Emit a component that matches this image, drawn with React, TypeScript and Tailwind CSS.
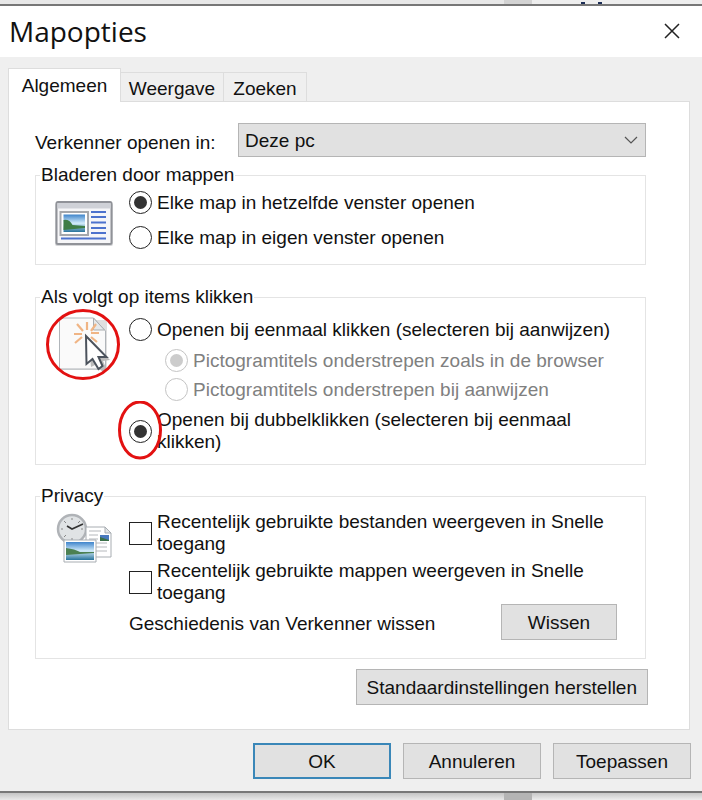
import type { ReactNode } from 'react';

const buttonStyle = 'h-9 border border-[#b5b5b5] bg-[#e1e1e1] pt-0.5';

function Group({ title, icon, className, children }: { title: string; icon: ReactNode; className: string; children: ReactNode }) {
  return (
    <fieldset className={`mr-0.5 min-w-0 border border-[#e4e4e4] ${className}`}>
      <legend className="ml-1 h-6 bg-white px-px leading-6">{title}</legend>
      <div className="flex">
        <div className="w-[93px] shrink-0">{icon}</div>
        <div className="min-w-0 flex-1 pr-7">{children}</div>
      </div>
    </fieldset>
  );
}

type RadioProps = {
  id: string;
  name: string;
  label: string;
  checked?: boolean;
  disabled?: boolean;
  circled?: boolean;
};

function Radio({ id, name, label, checked, disabled, circled }: RadioProps) {
  return (
    <div className="relative flex items-center gap-[5px]">
      <input
        id={id}
        name={name}
        type="radio"
        defaultChecked={checked}
        disabled={disabled}
        className="peer grid h-[23px] w-[23px] shrink-0 appearance-none place-items-center rounded-full border border-[#222] bg-white before:h-[13px] before:w-[13px] before:rounded-full checked:before:bg-[#333] disabled:border-[#c4c4c4] checked:disabled:before:bg-[#ccc]"
      />
      <label htmlFor={id} className="peer-disabled:text-[#808080]">{label}</label>
      {circled && (
        <svg viewBox="0 0 44 60" className="pointer-events-none absolute -top-2 -left-[11px] h-[60px] w-11" aria-hidden="true">
          <ellipse cx="22" cy="29" rx="20.500" ry="28" fill="none" stroke="#e31111" strokeWidth="3" />
        </svg>
      )}
    </div>
  );
}

function Check({ id, label }: { id: string; label: string }) {
  return (
    <div className="flex items-center gap-[5px]">
      <input id={id} type="checkbox" className="h-[23px] w-[23px] shrink-0 appearance-none border border-[#222] bg-white checked:bg-[#333]" />
      <label htmlFor={id}>{label}</label>
    </div>
  );
}

function BrowseIcon() {
  return (
    <svg viewBox="0 0 64 50" className="mt-3 ml-4 h-[50px] w-16" aria-hidden="true">
      <defs>
        <linearGradient id="sky" x2="0" y2="1">
          <stop offset="0" stopColor="#3e84cb" />
          <stop offset=".5" stopColor="#d3ecfa" />
          <stop offset="1" stopColor="#28739b" />
        </linearGradient>
      </defs>
      <rect x="3" y="4" width="58" height="43" rx="2" fill="#d5d6d8" />
      <rect x="4.500" y="3" width="55" height="42" rx="1.500" fill="#f6f6f8" stroke="#909298" strokeWidth="2" />
      <path d="M5.500 4h53v5.500h-53z" fill="#cfd1d7" />
      <path d="M8.500 13h27.500v23H8.500z" fill="#fff" stroke="#a5a7ab" strokeWidth="2" />
      <path d="M11.500 15.500h21.500v17.500H11.500z" fill="url(#sky)" />
      <path d="M11.500 21q6-1 9 5l12.500 1v2l-21.500 2z" fill="#3f7d45" />
      <path d="M39 13h15M39 18h15M39 23.500h15M39 29h15M39 34h15M9 39.500h45" stroke="#4d72cd" strokeWidth="2" />
    </svg>
  );
}

function ClickIcon() {
  return (
    <svg viewBox="0 0 78 76" className="-mt-[3px] ml-2 h-[76px] w-[78px]" aria-hidden="true">
      <path d="M15 14h48v50H15z" fill="#dfdfdf" />
      <path d="M15.500 12h34l12 13v38h-46z" fill="#fafafa" stroke="#b0b5ba" />
      <path d="M49.500 12v12h11z" fill="#e6e9eb" stroke="#a9adb0" />
      <path d="M43 16v8M33 18l6 7M52 18l-5 7M30 28h8M47 27h8M38 31l-7 6M47 31l6 5" stroke="#f0b585" strokeWidth="2.200" />
      <path d="m44 31 22 23-7 1 4 9-4 3-6-9-6 3z" fill="#bbb" />
      <path d="m42 30 .500 28 6-5 6 10 4-3-4-9h8z" fill="#fff" stroke="#4c535d" strokeWidth="2" />
      <ellipse cx="39" cy="38.500" rx="35.500" ry="34" fill="none" stroke="#e31111" strokeWidth="3" />
    </svg>
  );
}

function PrivacyIcon() {
  return (
    <svg viewBox="0 0 64 60" className="ml-4 h-[60px] w-16" aria-hidden="true">
      <circle cx="20" cy="21" r="14" fill="#e0e3e5" stroke="#b0b3b7" strokeWidth="2.500" />
      <path d="M20 10v2M20 30v2M9 21h2M29 21h2M12 13l2 2M28 13l-2 2M12 29l2-2" stroke="#888" />
      <path d="m15 18 5 3 11-5" fill="none" stroke="#333" strokeWidth="1.600" />
      <path d="M34 19h19l6 6v24H34z" fill="#fff" stroke="#a8adb2" />
      <path d="M53 19v6h6z" fill="#e3e6e8" stroke="#a8adb2" />
      <path d="M37 23h12M37 27h9M37 31h9M37 35h18M37 39h18M37 43h18" stroke="#b5b8bc" />
      <path d="M48 27h9v6h-9z" fill="#4979be" />
      <path d="M48 29l9 3v1h-9z" fill="#3a7048" />
      <path d="M12 32h32v22H12z" fill="#fff" stroke="#a8adb2" />
      <path d="M14 34h28v18H14z" fill="url(#sky)" />
      <path d="M14 40q9 1 14 4h14v1l-28 2z" fill="#4c8052" />
    </svg>
  );
}

export default function App() {
  return (
    <div className="bg-[#e8e8e8] font-['Liberation_Sans',Arial,sans-serif] text-[19px] leading-[22px] text-[#111]">
      <div className="flex h-1 justify-end">
        <div className="w-7 bg-[#d3d3d3]" />
        <div className="flex w-[170px] items-end gap-[13px] bg-[#eee] pl-[49px]">
          <span className="h-0.5 w-1 bg-[#1d2f57]" />
          <span className="h-0.5 w-1 bg-[#1d2f57]" />
        </div>
      </div>

      <main className="border-y-2 border-[#777] bg-[#efefef]">
        <header className="flex h-[51px] items-center justify-between bg-white pr-[18px] pb-0.5 pl-[9px]">
          <h1 className="font-['Open_Sans','Noto_Sans',sans-serif] text-[28px] leading-9">Mapopties</h1>
          <button aria-label="Sluiten" className="grid h-6 w-6 place-items-center">
            <svg viewBox="0 0 16 16" className="h-4 w-4" aria-hidden="true">
              <path d="m1 1 14 14M15 1 1 15" stroke="#222" strokeWidth="1.500" />
            </svg>
          </button>
        </header>

        <div className="px-2 pt-[11px]">
          <div role="tablist" className="flex items-end">
            <button role="tab" aria-selected="true" className="relative z-10 -mb-px h-[34px] w-[113px] border border-b-0 border-[#ddd] bg-white">Algemeen</button>
            <button role="tab" aria-selected="false" className="h-[29px] w-[103px] border border-b-0 border-l-0 border-[#ddd] pt-1">Weergave</button>
            <button role="tab" aria-selected="false" className="h-[29px] w-[83px] border border-b-0 border-l-0 border-[#ddd] pt-1">Zoeken</button>
          </div>

          <section role="tabpanel" className="mr-1 border border-[#ddd] bg-white pt-[21px] pr-[41px] pb-6 pl-[26px]">
            <div className="mr-0.5 flex items-center">
              <label htmlFor="open-in" className="w-[203px] pt-1.5">Verkenner openen in:</label>
              <div className="relative flex-1">
                <select id="open-in" className="block h-[34px] w-full appearance-none border border-[#b5b5b5] bg-[#e1e1e1] px-1.5 pt-0.5">
                  <option>Deze pc</option>
                </select>
                <svg viewBox="0 0 14 8" className="pointer-events-none absolute top-[13px] right-2 h-2 w-3.5" aria-hidden="true">
                  <path d="m1 1 6 6 6-6" fill="none" stroke="#555" strokeWidth="1.200" />
                </svg>
              </div>
            </div>

            <Group title="Bladeren door mappen" icon={<BrowseIcon />} className="mt-1.5">
              <div className="flex flex-col gap-3 pt-1 pb-[15px]">
                <Radio id="same-window" name="browse" label="Elke map in hetzelfde venster openen" checked />
                <Radio id="own-window" name="browse" label="Elke map in eigen venster openen" />
              </div>
            </Group>

            <Group title="Als volgt op items klikken" icon={<ClickIcon />} className="mt-5">
              <div className="flex flex-col gap-2 pt-[9px] pb-[11px]">
                <Radio id="single-click" name="click" label="Openen bij eenmaal klikken (selecteren bij aanwijzen)" />
                <div className="flex flex-col gap-1.5 pl-9">
                  <Radio id="underline-browser" name="underline" label="Pictogramtitels onderstrepen zoals in de browser" checked disabled />
                  <Radio id="underline-hover" name="underline" label="Pictogramtitels onderstrepen bij aanwijzen" disabled />
                </div>
                <Radio id="double-click" name="click" label="Openen bij dubbelklikken (selecteren bij eenmaal klikken)" checked circled />
              </div>
            </Group>

            <Group title="Privacy" icon={<PrivacyIcon />} className="mt-[19px]">
              <div className="flex flex-col gap-[5px] pt-[3px]">
                <Check id="recent-files" label="Recentelijk gebruikte bestanden weergeven in Snelle toegang" />
                <Check id="recent-folders" label="Recentelijk gebruikte mappen weergeven in Snelle toegang" />
              </div>
              <div className="flex items-center justify-between pb-[18px]">
                <span className="pt-1">Geschiedenis van Verkenner wissen</span>
                <button className={`w-[116px] ${buttonStyle}`}>Wissen</button>
              </div>
            </Group>

            <div className="mt-2.5 flex justify-end">
              <button className={`px-2.5 ${buttonStyle}`}>Standaardinstellingen herstellen</button>
            </div>
          </section>
        </div>

        <footer className="flex justify-end gap-3 px-[11px] pt-[13px] pb-3">
          <button className="h-9 w-[138px] border-2 border-[#3a87b8] bg-[#e1e1e1] pt-0.5">OK</button>
          <button className={`w-[138px] ${buttonStyle}`}>Annuleren</button>
          <button className={`w-[138px] ${buttonStyle}`}>Toepassen</button>
        </footer>
      </main>

      <div className="flex h-[7px] justify-end">
        <div className="flex-1 bg-gradient-to-b from-[#c4c4c4] to-[#e8e8e8]" />
        <div className="w-7 bg-[#b4b4b4]" />
        <div className="w-[170px] bg-gradient-to-b from-[#c8c8c8] to-[#eee]" />
      </div>
    </div>
  );
}
